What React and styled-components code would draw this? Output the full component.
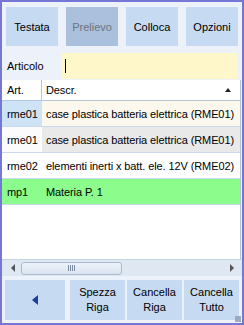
import React from "react";
import styled, { createGlobalStyle } from "styled-components";

const GlobalStyle = createGlobalStyle`
    html, body {
        margin: 0;
        padding: 0;
        background: #ffffff;
    }
    * {
        box-sizing: border-box;
    }
`;

const Window = styled.div`
    width: 244px;
    height: 325px;
    border: 2px solid #7676d4;
    background-color: #edf1fa;
    display: flex;
    flex-flow: column;
    font-family: "Liberation Sans", Arial, sans-serif;
    font-size: 11px;
    color: #000;
    position: relative;
    overflow: hidden;
`;

const Toolbar = styled.div`
    display: flex;
    gap: 8px;
    padding: 5px 4px 0 4px;
`;

const TopButton = styled.div`
    width: 52px;
    height: 39px;
    display: flex;
    align-items: center;
    justify-content: center;
    background-color: ${props => props.disabled ? "#aac0dc" : "#c6daf2"};
    color: ${props => props.disabled ? "#6e7480" : "#000"};
`;

const FieldRow = styled.div`
    display: flex;
    align-items: center;
    margin-top: 7px;
    padding: 0 4px 0 5px;
    height: 26px;
`;

const FieldLabel = styled.span`
    width: 55px;
`;

const FieldInput = styled.div`
    flex: 1;
    height: 26px;
    background-color: #fdf7c9;
    display: flex;
    align-items: center;
    padding-left: 3px;
`;

const Caret = styled.div`
    width: 1px;
    height: 14px;
    background-color: #000;
`;

const Grid = styled.div`
    flex: 1;
    margin-top: 1px;
    background-color: #fff;
    border-right: 1px solid #b4c4da;
    margin-right: 1px;
    display: flex;
    flex-flow: column;
    letter-spacing: -0.1px;
`;

const Row = styled.div`
    display: flex;
    height: ${props => props.header ? "21px" : "26px"};
    border-bottom: 1px solid ${props => props.header ? "#b6c6dc" : "#c9d8ec"};
    background-color: ${props => props.bg || "#fff"};
`;

const Cell = styled.div`
    display: flex;
    align-items: center;
    white-space: nowrap;
    overflow: hidden;
    background-color: ${props => props.bg || "transparent"};
    border-right: ${props => props.divider ? "1px solid #b6c6dc" : "none"};
    ${props => props.first
        ? "width: 40px; padding-left: 5px;"
        : "flex: 1; padding-left: 4px; padding-right: 4px;"}
    justify-content: space-between;
`;

const SortArrow = styled.span`
    width: 0;
    height: 0;
    border-left: 3px solid transparent;
    border-right: 3px solid transparent;
    border-bottom: 4px solid #222;
    margin-right: 5px;
`;

const Filler = styled.div`
    flex: 1;
`;

const ScrollBar = styled.div`
    height: 17px;
    display: flex;
    align-items: center;
    background-color: #dfe7f3;
    border-top: 1px solid #c4d2e6;
    padding: 0 3px 0 4px;
`;

const Arrow = styled.span`
    width: 0;
    height: 0;
    border-top: ${props => props.half || 4}px solid transparent;
    border-bottom: ${props => props.half || 4}px solid transparent;
    ${props => props.dir === "left"
        ? `border-right: ${props.size || 4}px solid ${props.color || "#555"};`
        : `border-left: ${props.size || 4}px solid ${props.color || "#555"};`}
`;

const ArrowSlot = styled.div`
    width: 14px;
    display: flex;
    justify-content: center;
`;

const Track = styled.div`
    flex: 1;
    height: 100%;
    display: flex;
    align-items: center;
    padding-left: 1px;
`;

const Thumb = styled.div`
    width: 101px;
    height: 13px;
    border: 1px solid #a9b9cf;
    border-radius: 3px;
    background: linear-gradient(#eef3fa, #d9e3f0);
    display: flex;
    align-items: center;
    justify-content: center;
    gap: 1px;
`;

const Grip = styled.span`
    width: 1px;
    height: 6px;
    background-color: #7d8ca3;
`;

const BottomBar = styled.div`
    display: flex;
    padding: 4px 3px 3px 3px;
    gap: 2px;
`;

const BottomButton = styled.div`
    width: ${props => props.wide ? "60px" : "55px"};
    margin-right: ${props => props.wide ? "3px" : "0"};
    height: 40px;
    background-color: #c6daf2;
    display: flex;
    align-items: center;
    justify-content: center;
    text-align: center;
    line-height: 15px;
`;

const SizeGrip = styled.div`
    position: absolute;
    right: 1px;
    bottom: 1px;
    width: 6px;
    height: 6px;
    background-image: radial-gradient(#9aa6b8 0.7px, transparent 0.8px);
    background-size: 2px 2px;
`;

const rows = [
    { art: "rme01", descr: "case plastica batteria elettrica (RME01)", artBg: "#cfe3f7", descrBg: "#fdf8ed" },
    { art: "rme01", descr: "case plastica batteria elettrica (RME01)", artBg: "#fbfbfb", descrBg: "#e9e9e9" },
    { art: "rme02", descr: "elementi inerti x batt. ele. 12V (RME02)", artBg: "#fff", descrBg: "#fff" },
    { art: "mp1", descr: "Materia P. 1", rowBg: "#8cfc8c" },
];

const App = () => {
    return (
        <Window>
            <GlobalStyle/>
            <Toolbar>
                <TopButton>Testata</TopButton>
                <TopButton disabled>Prelievo</TopButton>
                <TopButton>Colloca</TopButton>
                <TopButton>Opzioni</TopButton>
            </Toolbar>
            <FieldRow>
                <FieldLabel>Articolo</FieldLabel>
                <FieldInput><Caret/></FieldInput>
            </FieldRow>
            <Grid>
                <Row header>
                    <Cell first divider>Art.</Cell>
                    <Cell>Descr.<SortArrow/></Cell>
                </Row>
                {rows.map((r, i) => (
                    <Row key={i} bg={r.rowBg}>
                        <Cell first bg={r.artBg}>{r.art}</Cell>
                        <Cell bg={r.descrBg}>{r.descr}</Cell>
                    </Row>
                ))}
                <Filler/>
            </Grid>
            <ScrollBar>
                <ArrowSlot><Arrow dir="left"/></ArrowSlot>
                <Track>
                    <Thumb><Grip/><Grip/><Grip/><Grip/></Thumb>
                </Track>
                <ArrowSlot><Arrow dir="right"/></ArrowSlot>
            </ScrollBar>
            <BottomBar>
                <BottomButton wide><Arrow dir="left" size={6} half={5} color="#1d3f98"/></BottomButton>
                <BottomButton>Spezza<br/>Riga</BottomButton>
                <BottomButton>Cancella<br/>Riga</BottomButton>
                <BottomButton>Cancella<br/>Tutto</BottomButton>
            </BottomBar>
            <SizeGrip/>
        </Window>
    )
};

export default App
